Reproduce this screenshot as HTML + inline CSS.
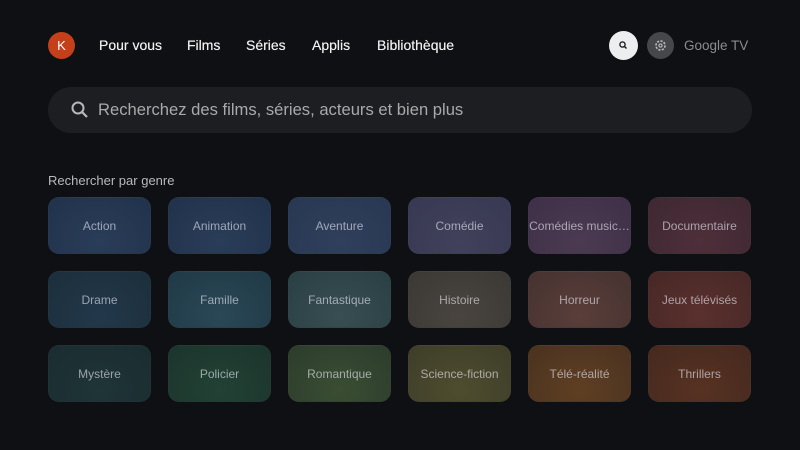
<!DOCTYPE html>
<html><head><meta charset="utf-8"><style>
*{margin:0;padding:0;box-sizing:border-box}
body{width:800px;height:450px;background:#0f1013;font-family:"Liberation Sans",sans-serif;position:relative;overflow:hidden}
.a{position:absolute}
.nav{top:37px;font-size:14px;color:#f0f0f0;line-height:16px;text-shadow:0 0 .4px #fff}
.t{position:absolute;width:103px;height:57px;border-radius:11px;display:flex;align-items:center;justify-content:center;font-size:12px;color:rgba(230,230,240,.62);white-space:nowrap;overflow:hidden;border:1px solid rgba(255,255,255,.02)}
</style></head><body>
<div class="a" style="left:48px;top:32px;width:27px;height:27px;border-radius:50%;background:#c4401a;color:#fff;font-size:13px;text-align:center;line-height:27px">K</div>
<div class="a nav" style="left:99px">Pour vous</div>
<div class="a nav" style="left:187px">Films</div>
<div class="a nav" style="left:246px">Séries</div>
<div class="a nav" style="left:312px">Applis</div>
<div class="a nav" style="left:377px">Bibliothèque</div>
<div class="a" style="left:609px;top:31px;width:29px;height:29px;border-radius:50%;background:#eceef0"><svg width="29" height="29"><circle cx="13.5" cy="13.5" r="2.6" stroke="#222" stroke-width="1.4" fill="none"/><line x1="15.5" y1="15.5" x2="17.5" y2="17.5" stroke="#222" stroke-width="1.5"/></svg></div>
<div class="a" style="left:647px;top:32px;width:27px;height:27px;border-radius:50%;background:#45474b"><svg width="27" height="27"><circle cx="13.5" cy="13.5" r="4.5" stroke="#bbb" stroke-width="1.6" fill="none" stroke-dasharray="2.2 1.3"/><circle cx="13.5" cy="13.5" r="1.6" stroke="#bbb" stroke-width="1.1" fill="none"/></svg></div>
<div class="a" style="left:684px;top:38px;font-size:13.5px;color:#8a8c90">Google TV</div>
<div class="a" style="left:48px;top:87px;width:704px;height:46px;border-radius:23px;background:#1d1e21"><svg class="a" style="left:22px;top:13px" width="20" height="20"><circle cx="8" cy="8" r="5.5" stroke="#b8b8b8" stroke-width="2" fill="none"/><line x1="12" y1="12" x2="17" y2="17" stroke="#b8b8b8" stroke-width="2.2"/></svg><div class="a" style="left:50px;top:13px;font-size:16.6px;color:#a8a9ab">Recherchez des films, séries, acteurs et bien plus</div></div>
<div class="a" style="left:48px;top:173px;font-size:13px;color:#b8b9bb">Rechercher par genre</div>
<div class="t" style="left:48px;top:197px;background:radial-gradient(ellipse at 50% 80%,#2a3d58,#21324b)">Action</div>
<div class="t" style="left:168px;top:197px;background:radial-gradient(ellipse at 50% 80%,#2a3d58,#21324b)">Animation</div>
<div class="t" style="left:288px;top:197px;background:radial-gradient(ellipse at 50% 80%,#30405c,#283752)">Aventure</div>
<div class="t" style="left:408px;top:197px;background:radial-gradient(ellipse at 50% 80%,#41415b,#373853)">Comédie</div>
<div class="t" style="left:528px;top:197px;background:radial-gradient(ellipse at 50% 80%,#4b3a52,#3e3048)">Comédies music…</div>
<div class="t" style="left:648px;top:197px;background:radial-gradient(ellipse at 50% 80%,#4e2f3a,#3e2831)">Documentaire</div>
<div class="t" style="left:48px;top:271px;background:radial-gradient(ellipse at 50% 80%,#22384a,#1c2e3b)">Drame</div>
<div class="t" style="left:168px;top:271px;background:radial-gradient(ellipse at 50% 80%,#2a4856,#203946)">Famille</div>
<div class="t" style="left:288px;top:271px;background:radial-gradient(ellipse at 50% 80%,#384e52,#2a3f43)">Fantastique</div>
<div class="t" style="left:408px;top:271px;background:radial-gradient(ellipse at 50% 80%,#49443f,#3b3935)">Histoire</div>
<div class="t" style="left:528px;top:271px;background:radial-gradient(ellipse at 50% 80%,#5a3e3a,#453230)">Horreur</div>
<div class="t" style="left:648px;top:271px;background:radial-gradient(ellipse at 50% 80%,#5a302d,#462826)">Jeux télévisés</div>
<div class="t" style="left:48px;top:345px;background:radial-gradient(ellipse at 50% 80%,#1f3538,#1a2c2f)">Mystère</div>
<div class="t" style="left:168px;top:345px;background:radial-gradient(ellipse at 50% 80%,#224235,#1c342c)">Policier</div>
<div class="t" style="left:288px;top:345px;background:radial-gradient(ellipse at 50% 80%,#3a4e33,#2c3c2c)">Romantique</div>
<div class="t" style="left:408px;top:345px;background:radial-gradient(ellipse at 50% 80%,#4f4d2e,#3d3d2a)">Science-fiction</div>
<div class="t" style="left:528px;top:345px;background:radial-gradient(ellipse at 50% 80%,#5f3f22,#4a3220)">Télé-réalité</div>
<div class="t" style="left:648px;top:345px;background:radial-gradient(ellipse at 50% 80%,#573222,#45291f)">Thrillers</div>
</body></html>
